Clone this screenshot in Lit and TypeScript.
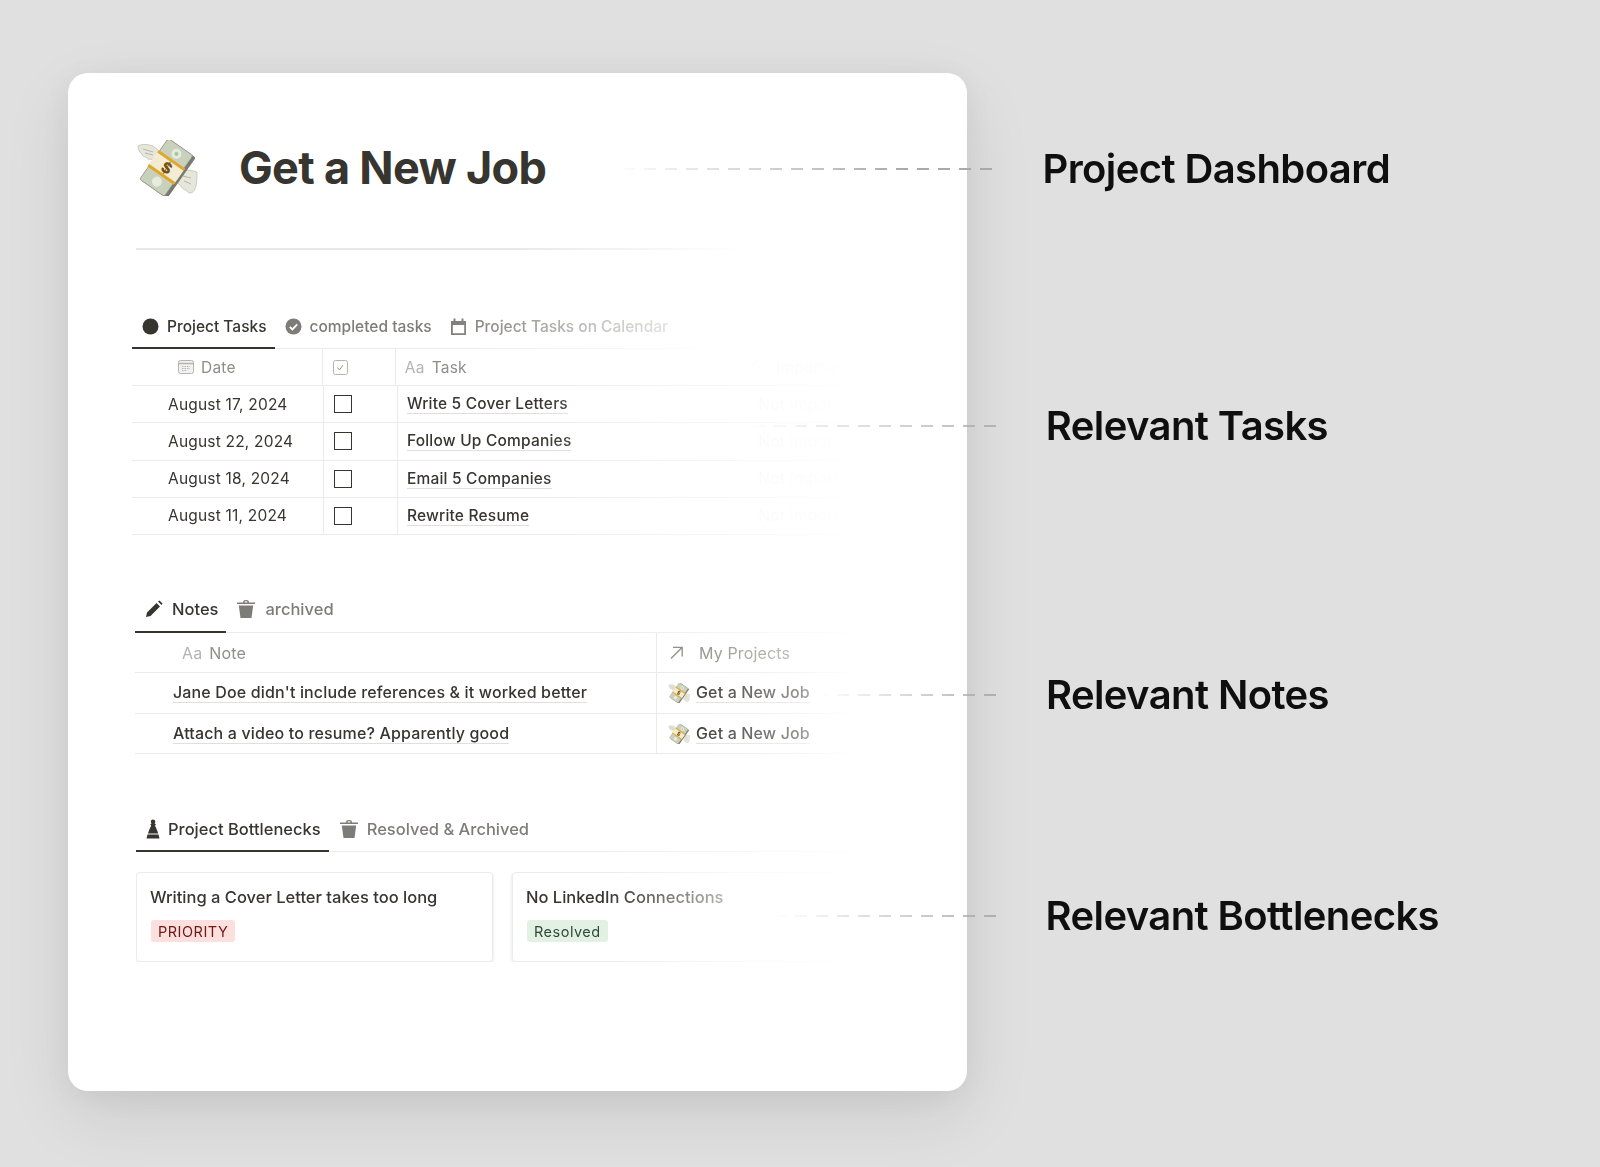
import { css, CSSResultGroup, html, LitElement, svg, TemplateResult } from "lit";
import { customElement } from "lit/decorators.js";

const money = (w: number): TemplateResult => html`
    <svg class="money" width=${w} height=${(w * 56) / 62} viewBox="0 0 62 56">
        <g fill="#e6e6da" stroke="#b9bbac" stroke-width=".7">
            <path d="M2 6c4-2 8-2 11-1 4 0 9 4 12 9l-4 7c-3 0-5-1-6-2-2 1-4 0-5-2-2 0-4-1-4-3-2-1-4-4-4-8z" />
            <path d="M61 32c0 5 0 10-1 14-1 4-3 7-6 7-2 0-3-2-4-3-2 0-4-2-5-4-2-1-4-4-5-7l-1-6c3-3 8-4 11-3 4 0 8 1 11 2z" />
        </g>
        <g fill="none" stroke="#a9ab9c" stroke-width=".8">
            <path d="M7 9l10 3M9 13l8 2M47 36l8 2M48 41l7 3" />
        </g>
        <g transform="translate(30.7 27.7) rotate(-55)">
            <rect x="-25" y="-13" width="50" height="31" rx="2" fill="#787a70" />
            <rect x="-25" y="-15.500" width="50" height="30" rx="2" fill="#c9d1bd" stroke="#8f9486" stroke-width=".8" />
            <circle cx="-17" cy="0" r="5" fill="#e6ebdc" />
            <circle cx="17" cy="0" r="5" fill="#e6ebdc" />
            <circle cx="17" cy="0" r="2" fill="#9ec7a6" />
            <rect x="-9" y="-16.500" width="18" height="32" fill="#f3ecd2" />
            <rect x="-10" y="-16.500" width="3" height="32" fill="#e0a72c" />
            <rect x="7" y="-16.500" width="3" height="32" fill="#e0a72c" />
            <text x="0" y="5.500" text-anchor="middle" font-family="Inter, sans-serif" font-weight="800" font-size="15" fill="#74500f" transform="rotate(85)">$</text>
        </g>
    </svg>
`;

const ICONS: { [key: string]: TemplateResult } = {
    dot: html`<svg width="17" height="17" viewBox="0 0 17 17"><circle cx="8.500" cy="8.500" r="8" fill="#37352f" /></svg>`,
    check: html`<svg width="17" height="17" viewBox="0 0 17 17"><circle cx="8.500" cy="8.500" r="8" fill="#7d7c78" /><path d="M4.800 8.800l2.600 2.600 4.800-5" fill="none" stroke="#fff" stroke-width="1.800" /></svg>`,
    calendar: html`<svg width="17" height="17" viewBox="0 0 17 17"><path d="M1 3h2.500V.500h2V3h6V.500h2V3H16v14H1zM2.800 7v8.200h11.400V7z" fill="#7d7c78" /></svg>`,
    pencil: html`<svg width="18" height="18" viewBox="0 0 18 18"><path d="M1 17l1-4.500L11.500 3 15 6.500 5.500 16zM13 1.500l1.500-1L17.500 3.500l-1 1.500z" fill="#37352f" /></svg>`,
    trash: html`<svg width="20" height="20" viewBox="0 0 20 20"><path d="M7 3.500C7 1.800 8 1 10 1s3 .8 3 2.500h6V5H1V3.500zM8.500 3.500h3C11.500 2.700 11 2.300 10 2.300s-1.500.4-1.500 1.200zM2.800 6.500h14.400L15.500 19h-11z" fill="#7d7c78" /></svg>`,
    piece: html`<svg width="14" height="20" viewBox="0 0 14 20"><path d="M7 .5c1.500 0 2.300 1 2.300 2.200 0 .7-.3 1.200-.7 1.600l1.300 1.200-.9 1.300c1.200 2.200 2.500 5 3.200 7.700H2c.7-2.700 2-5.500 3.200-7.700l-.9-1.300 1.300-1.200c-.4-.4-.7-.9-.7-1.600C4.700 1.500 5.500.5 7 .5zM1.500 15.500h11L13.500 19.500H.5z" fill="#37352f" /></svg>`,
};

const TASKS = [
    { date: "August 17, 2024", name: "Write 5 Cover Letters" },
    { date: "August 22, 2024", name: "Follow Up Companies" },
    { date: "August 18, 2024", name: "Email 5 Companies" },
    { date: "August 11, 2024", name: "Rewrite Resume" },
];

const NOTES = ["Jane Doe didn't include references & it worked better", "Attach a video to resume? Apparently good"];

const CALLOUTS = [
    { label: "Project Dashboard", cls: "c-dashboard" },
    { label: "Relevant Tasks", cls: "c-tasks" },
    { label: "Relevant Notes", cls: "c-notes" },
    { label: "Relevant Bottlenecks", cls: "c-bottlenecks" },
];

@customElement("app-root")
export class AppRoot extends LitElement {
    protected tab(icon: string, label: string, active: boolean = false): TemplateResult {
        return html`
            <div class=${active ? "tab active" : "tab"}>
                ${ICONS[icon]}
                <span>${label}</span>
            </div>
        `;
    }

    protected renderTasks(): TemplateResult {
        return html`
            <section class="tasks">
                <div class="tabs fade-tabs">
                    ${this.tab("dot", "Project Tasks", true)} ${this.tab("check", "completed tasks")}
                    ${this.tab("calendar", "Project Tasks on Calendar")}
                </div>
                <div class="task-table">
                    <div class="task-row head">
                        <div class="cell date-cell head-date">
                            <svg width="16" height="16" viewBox="0 0 16 16">
                                <rect x=".5" y="1.500" width="15" height="13" rx="2" fill="#f1f1ef" stroke="#b5b4b1" />
                                <path d="M.5 4.500h15" stroke="#b5b4b1" stroke-width="1.500" />
                                <path d="M4 7.500h8M4 9.500h8M4 11.500h5" stroke="#b5b4b1" stroke-dasharray="1.500 1" />
                            </svg>
                            Date
                        </div>
                        <div class="cell box-cell">
                            <svg width="15" height="15" viewBox="0 0 15 15">
                                <rect x=".5" y=".5" width="14" height="14" rx="2" fill="none" stroke="#b5b4b1" />
                                <path d="M4.500 7.500l2 2.500 3.500-5" fill="none" stroke="#9b9a97" />
                            </svg>
                        </div>
                        <div class="cell name-cell"><span class="aa">Aa</span>Task</div>
                        <div class="cell status-cell faint">
                            <svg width="16" height="16" viewBox="0 0 16 16">
                                <circle cx="8" cy="8" r="7" fill="none" stroke="#a9a8a4" />
                                <path d="M6.500 5l4 3-4 3z" fill="#a9a8a4" />
                            </svg>
                            Importance
                        </div>
                    </div>
                    ${TASKS.map(
                        (t) => html`
                            <div class="task-row">
                                <div class="cell date-cell">${t.date}</div>
                                <div class="cell box-cell"><span class="box"></span></div>
                                <div class="cell name-cell"><span class="link">${t.name}</span></div>
                                <div class="cell status-cell faint">Not Important</div>
                            </div>
                        `
                    )}
                </div>
            </section>
        `;
    }

    protected renderNotes(): TemplateResult {
        return html`
            <section class="notes">
                <div class="tabs fade-notes">${this.tab("pencil", "Notes", true)} ${this.tab("trash", "archived")}</div>
                <div class="note-table">
                    <div class="note-row head">
                        <div class="cell note-cell head-note"><span class="aa">Aa</span>Note</div>
                        <div class="cell project-cell">
                            <svg width="15" height="15" viewBox="0 0 15 15">
                                <path d="M2 13.500L13 2.500M4 2.300h9.200v9.200" fill="none" stroke="#8f8e8a" stroke-width="1.300" />
                            </svg>
                            <span class="project-head">My Projects</span>
                        </div>
                    </div>
                    ${NOTES.map(
                        (n) => html`
                            <div class="note-row">
                                <div class="cell note-cell"><span class="link">${n}</span></div>
                                <div class="cell project-cell relation">
                                    ${money(22)}
                                    <span class="link">Get a New Job</span>
                                </div>
                            </div>
                        `
                    )}
                </div>
            </section>
        `;
    }

    protected renderBottlenecks(): TemplateResult {
        return html`
            <section class="bottlenecks">
                <div class="tabs fade-bottleneck">
                    ${this.tab("piece", "Project Bottlenecks", true)} ${this.tab("trash", "Resolved & Archived")}
                </div>
                <div class="gallery">
                    <div class="item">
                        <div class="item-title">Writing a Cover Letter takes too long</div>
                        <span class="tag red">PRIORITY</span>
                    </div>
                    <div class="item faded">
                        <div class="item-title">No LinkedIn Connections</div>
                        <span class="tag green">Resolved</span>
                    </div>
                </div>
            </section>
        `;
    }

    protected render(): TemplateResult {
        return html`
            <main class="card">
                <header class="title-row">
                    ${money(62)}
                    <h1>Get a New Job</h1>
                </header>
                <div class="divider"></div>
                ${this.renderTasks()} ${this.renderNotes()} ${this.renderBottlenecks()}
            </main>
            ${CALLOUTS.map(
                (c) => html`
                    <div class="callout ${c.cls}">
                        <div class="dash"></div>
                        <div class="callout-label">${c.label}</div>
                    </div>
                `
            )}
        `;
    }

    static get styles(): CSSResultGroup {
        return css`
            :host {
                display: block;
                position: relative;
                width: 1600px;
                height: 1167px;
                overflow: hidden;
                background: #e0e0e0;
                font-family: Inter, "Noto Sans", sans-serif;
                color: #37352f;
            }
            svg {
                flex: none;
                display: block;
            }
            .card {
                box-sizing: border-box;
                position: absolute;
                left: 68px;
                top: 73px;
                width: 899px;
                height: 1018px;
                border-radius: 20px;
                background: #fff;
                box-shadow: 0 24px 70px rgba(0, 0, 0, 0.09), 0 6px 30px rgba(0, 0, 0, 0.05);
                padding: 66px 0 0 68px;
            }
            .title-row {
                display: flex;
                align-items: center;
                gap: 41px;
                height: 58px;
            }
            h1 {
                margin: 0;
                font-size: 45px;
                font-weight: 700;
                letter-spacing: -0.7px;
                line-height: 58px;
                color: #37352f;
            }
            .divider {
                width: 610px;
                height: 2px;
                margin-top: 51px;
                background: linear-gradient(to right, #e7e7e6 60%, #fff);
            }
            .tabs {
                display: flex;
                height: 39px;
                align-items: stretch;
                font-size: 15.5px;
                font-weight: 500;
                color: #7d7c78;
                border-bottom: 1px solid #ebebea;
            }
            .tab {
                display: flex;
                align-items: center;
                gap: 8px;
                padding: 0 8px 3px 10px;
                white-space: nowrap;
                margin-bottom: -1px;
                border-bottom: 2px solid transparent;
            }
            .tab.active {
                color: #37352f;
                border-bottom-color: #37352f;
            }
            .cell {
                box-sizing: border-box;
                display: flex;
                align-items: center;
                white-space: nowrap;
            }
            .link {
                border-bottom: 1px solid rgba(55, 53, 47, 0.16);
                line-height: 19px;
            }
            .aa {
                color: #b5b4b1;
                margin-right: 7px;
            }

            /* tasks */
            .tasks {
                margin: 59px 0 0 -4px;
            }
            .fade-tabs {
                width: 575px;
                mask-image: linear-gradient(to right, #000 55%, rgba(0, 0, 0, 0.2) 94%, transparent);
            }
            .task-table {
                width: 730px;
                font-size: 15.5px;
                letter-spacing: 0.2px;
                mask-image: linear-gradient(to right, #000 55%, rgba(0, 0, 0, 0.5) 78%, transparent);
            }
            .task-row {
                display: flex;
                height: 37.2px;
                box-sizing: border-box;
                border-bottom: 1px solid #ebebea;
            }
            .task-row.head {
                color: #8f8e8a;
            }
            .date-cell {
                width: 195px;
                padding-left: 36px;
                border-right: 1px solid #ebebea;
            }
            .head-date {
                padding-left: 46px;
                gap: 7px;
            }
            .box-cell {
                width: 75px;
                padding-left: 10px;
                border-right: 1px solid #ebebea;
            }
            .box {
                box-sizing: border-box;
                width: 18px;
                height: 18px;
                border: 1.500px solid #37352f;
            }
            .name-cell {
                width: 367px;
                padding-left: 9px;
                font-weight: 500;
            }
            .head .name-cell {
                font-weight: 400;
            }
            .status-cell {
                flex: 1;
                gap: 8px;
            }
            .faint {
                color: #37352f;
                opacity: 0.07;
            }

            /* notes */
            .notes {
                margin: 56px 0 0 -1px;
            }
            .notes .tabs {
                height: 41px;
                font-size: 16.5px;
                width: 730px;
            }
            .notes .tab {
                gap: 9px;
            }
            .fade-notes {
                mask-image: linear-gradient(to right, #000 65%, transparent);
            }
            .note-table {
                width: 720px;
                font-size: 16px;
                letter-spacing: 0.15px;
                mask-image: linear-gradient(to right, #000 76%, rgba(0, 0, 0, 0.55) 92%, transparent);
            }
            .note-row {
                display: flex;
                height: 40.500px;
                box-sizing: border-box;
                border-bottom: 1px solid #ebebea;
            }
            .note-row.head {
                color: #8f8e8a;
            }
            .note-cell {
                width: 522px;
                padding-left: 38px;
                font-weight: 500;
                border-right: 1px solid #ebebea;
            }
            .head-note {
                padding-left: 47px;
                font-weight: 400;
            }
            .project-cell {
                flex: 1;
                padding-left: 12px;
                gap: 9px;
            }
            .project-head {
                margin-left: 6px;
            }
            .relation {
                padding-left: 11px;
                gap: 6px;
                font-weight: 500;
            }

            /* bottlenecks */
            .bottlenecks {
                margin: 56px 0 0 0;
            }
            .bottlenecks .tabs {
                height: 41px;
                font-size: 16.500px;
                width: 730px;
                mask-image: linear-gradient(to right, #000 60%, transparent);
            }
            .gallery {
                display: flex;
                gap: 19px;
                width: 730px;
                margin-top: 20px;
                mask-image: linear-gradient(to right, #000 64%, rgba(0, 0, 0, 0.25) 84%, transparent);
            }
            .item {
                box-sizing: border-box;
                width: 357px;
                height: 90px;
                flex: none;
                padding: 13px 13px 0 13px;
                border-radius: 4px;
                border: 1px solid #ebebea;
                box-shadow: 0 1px 3px rgba(15, 15, 15, 0.14);
            }
            .item-title {
                font-size: 16.500px;
                font-weight: 500;
                line-height: 22px;
                white-space: nowrap;
            }
            .tag {
                display: inline-block;
                margin: 12px 0 0 1px;
                padding: 0 7px;
                height: 22px;
                line-height: 23px;
                font-size: 14.500px;
                letter-spacing: 0.5px;
                border-radius: 3px;
            }
            .red {
                background: #fde0dd;
                color: #6e1a1a;
            }
            .green {
                background: #e3f1e5;
                color: #2e4a35;
            }

            /* callouts: leader lines run over the card */
            .callout {
                position: absolute;
                display: flex;
                align-items: center;
                gap: 50px;
                right: 0;
            }
            .dash {
                flex: 1;
                height: 1.500px;
                background: repeating-linear-gradient(to left, #a9a9a9 0 12px, transparent 12px 21px);
            }
            .callout-label {
                font-size: 40px;
                font-weight: 600;
                letter-spacing: -0.6px;
                color: #0f0f0f;
                white-space: nowrap;
                line-height: 48px;
            }
            .c-dashboard {
                left: 610px;
                top: 145px;
                padding-right: 210px;
                mask-image: linear-gradient(to right, transparent, #000 30%);
            }
            .c-tasks {
                left: 750px;
                top: 402px;
                padding-right: 272px;
                mask-image: linear-gradient(to right, transparent, #000 35%);
            }
            .c-notes {
                left: 820px;
                top: 671px;
                padding-right: 271px;
                mask-image: linear-gradient(to right, transparent, #000 25%);
            }
            .c-bottlenecks {
                left: 775px;
                top: 892px;
                padding-right: 161px;
                mask-image: linear-gradient(to right, transparent, #000 30%);
            }
        `;
    }
}
